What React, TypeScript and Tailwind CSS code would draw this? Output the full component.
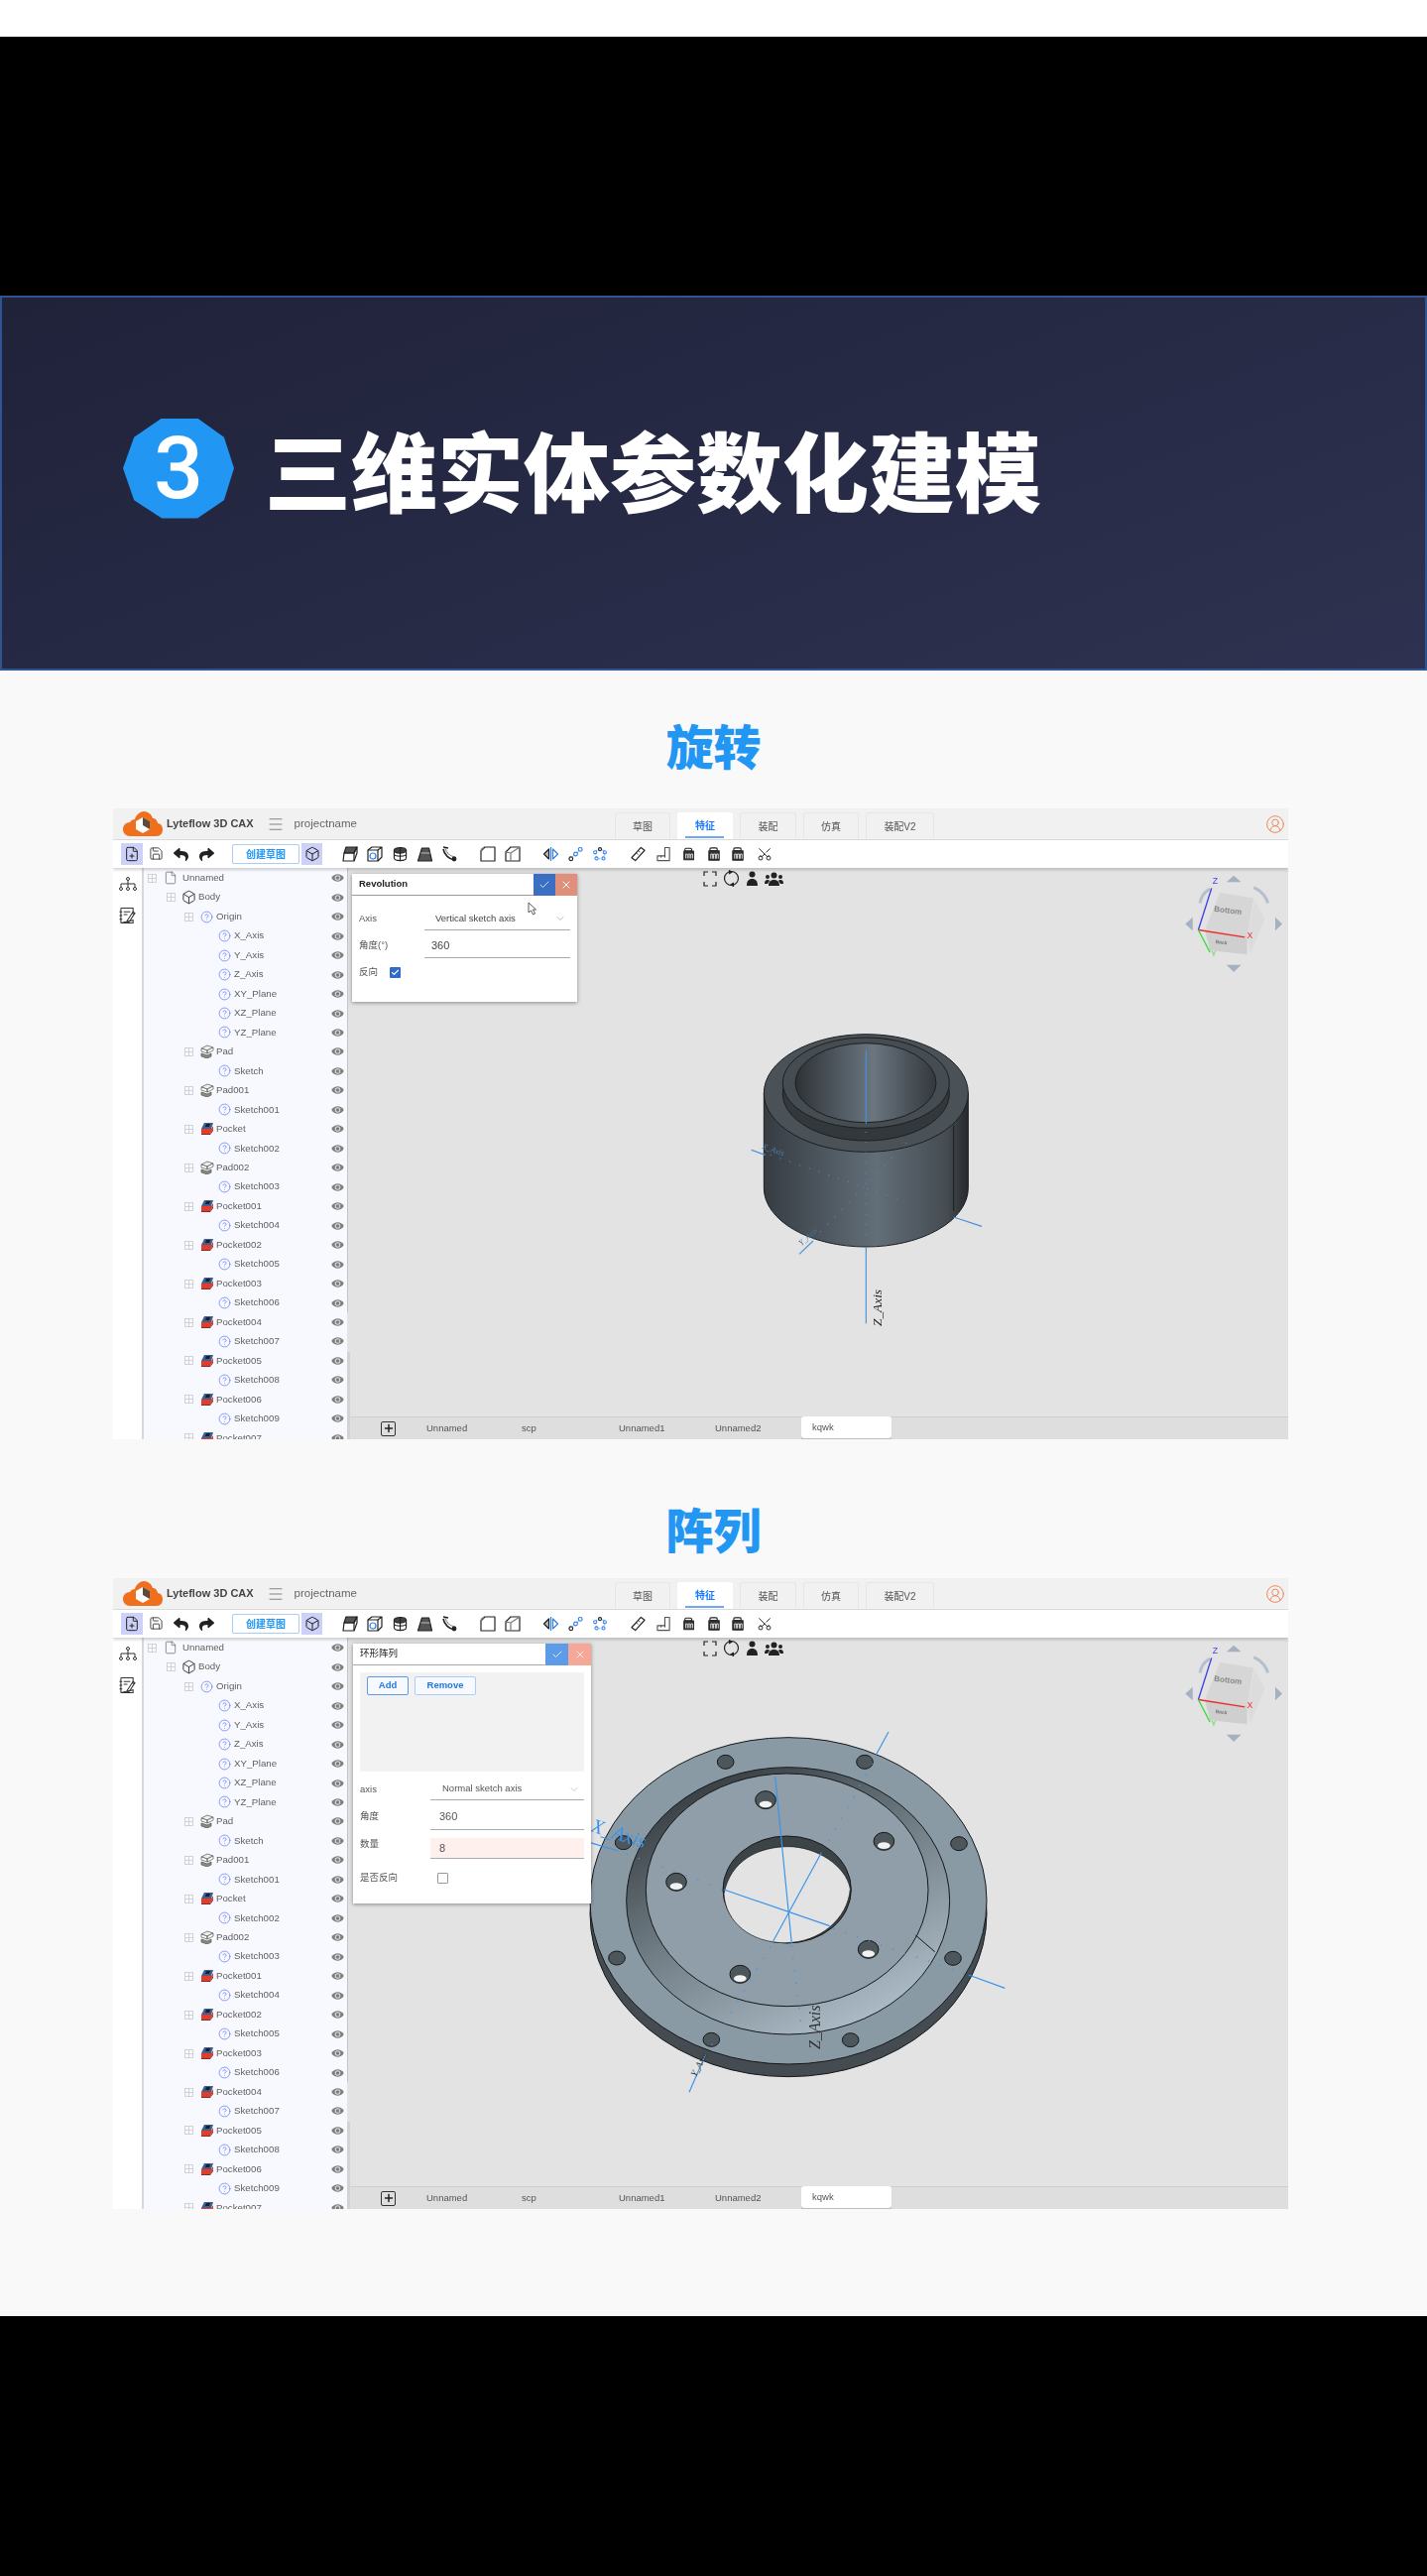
import React from "react";
import { Box, Check, ChevronDown, CircleHelp, CircleUserRound, File, FilePlus, Menu, Plus, Save, Scissors, X } from "lucide-react";
import { FaReply, FaShare } from "react-icons/fa";

const S = ({ children }: { children: React.ReactNode }) => (
  <svg viewBox="0 0 16 16" className="w-full h-full" fill="none" stroke="#222" strokeWidth="1.2" strokeLinejoin="round">
    {children}
  </svg>
);

const Can = () => (
  <S>
    <rect x="3" y="1.5" width="8" height="3" rx="1.5" />
    <path d="M2 4.5h11v10H2z" fill="#333" />
    <path d="M4 13V8h2v5M7 13V8h2v5M10 13V8h2v5" stroke="#eee" strokeWidth="0.9" />
  </S>
);

const Toolbar = () => (
  <div className="h-[28px] bg-white flex items-center relative z-10 shadow-[0_2px_3px_rgba(0,0,0,0.18)]">
    <div className="ml-[8px] w-[22px] h-[22px] bg-[#cdd0f7] flex items-center justify-center">
      <FilePlus size={16} strokeWidth={1.5} color="#222" />
    </div>
    <div className="ml-[6px] w-[15px] h-[16px]"><Save size={15} strokeWidth={1.4} color="#333" /></div>
    <div className="ml-[10px] w-[15px]"><FaReply size={15} color="#222" /></div>
    <div className="ml-[11px] w-[15px]"><FaShare size={15} color="#222" /></div>
    <div className="ml-[18px] w-[68px] h-[20px] border border-[#a9cdf5] rounded-[2px] flex items-center justify-center text-[10px] font-bold text-[#2196f3]">创建草图</div>
    <div className="ml-[2px] w-[21px] h-[22px] bg-[#cdd0f7] flex items-center justify-center">
      <Box size={16} strokeWidth={1.5} color="#222" />
    </div>
    <div className="ml-[20px] w-[16px] h-[16px]"><S><path d="M4 1h11l-3 6H2z" fill="#555" /><path d="M2 7h10v8H1z" /><path d="M12 7l3-6v6l-3 8" /></S></div>
    <div className="ml-[9px] w-[16px] h-[16px]"><S><path d="M1 4h10v11H1z" /><path d="M1 4l4-3h10v10l-4 4M11 4l4-3" /><circle cx="6" cy="10" r="3" stroke="#2f80ed" /></S></div>
    <div className="ml-[10px] w-[15px] h-[16px]"><S><ellipse cx="8" cy="4" rx="6.5" ry="3" fill="#444" /><path d="M1.500 4v8c0 4 13 4 13 0V4" /><path d="M1.500 8c0 3 13 3 13 0M8 1v14" /></S></div>
    <div className="ml-[9px] w-[17px] h-[16px]"><S><path d="M5 2h7l3 13H1z" fill="#555" /><path d="M4 7h9" stroke="#aaa" /></S></div>
    <div className="ml-[8px] w-[16px] h-[16px]"><S><path d="M2 1l5 1M2 3c1 6 6 10 11 11" strokeWidth="1.600" /><path d="M4 2c1 5 5 8 10 9" stroke="#888" /><circle cx="13" cy="13" r="1.800" fill="#222" /></S></div>
    <div className="ml-[23px] w-[16px] h-[16px]"><S><path d="M1 15V5l4-4h10v14z" /><path d="M4 1.500C2 2 1.500 3 1 5" strokeWidth="1.800" stroke="#777" /></S></div>
    <div className="ml-[9px] w-[16px] h-[16px]"><S><path d="M1 15V6l5-5h9v14z" /><path d="M1 6l5 1v8M6 7l9-6" stroke="#777" /></S></div>
    <div className="ml-[22px] w-[17px] h-[16px]"><S><path d="M6 3v10L1 8z" fill="#bbb" /><path d="M8 1v14" stroke="#2f80ed" /><path d="M10 3v10l5-5z" stroke="#2f80ed" /></S></div>
    <div className="ml-[9px] w-[15px] h-[16px]"><S><circle cx="3" cy="13" r="2" /><circle cx="8" cy="8" r="2" stroke="#2f80ed" /><circle cx="13" cy="3" r="2" stroke="#2f80ed" /><path d="M4.500 11.500l2-2M9.500 6.500l2-2" stroke="#2f80ed" strokeDasharray="1 1" /></S></div>
    <div className="ml-[10px] w-[14px] h-[16px]"><S><circle cx="8" cy="8" r="5.500" stroke="#8db8f0" strokeDasharray="2 2" /><circle cx="8" cy="2.500" r="1.800" /><circle cx="2.500" cy="6" r="1.800" stroke="#2f80ed" /><circle cx="13.500" cy="6" r="1.800" stroke="#2f80ed" /><circle cx="4" cy="13" r="1.800" stroke="#2f80ed" /><circle cx="12" cy="13" r="1.800" stroke="#2f80ed" /></S></div>
    <div className="ml-[24px] w-[15px] h-[16px]"><S><path d="M11 1l4 3-10 11-4-3z" /><path d="M8 4.500l2 1.500M6 7l2 1.500" strokeWidth="0.800" /></S></div>
    <div className="ml-[11px] w-[15px] h-[16px]"><S><path d="M9 1h5v14H1v-5h8z" stroke="#555" /><path d="M9 10v2M5 10v2" strokeWidth="0.800" /></S></div>
    <div className="ml-[11px] w-[14px] h-[16px]"><Can /></div>
    <div className="ml-[11px] w-[15px] h-[16px]"><Can /></div>
    <div className="ml-[9px] w-[15px] h-[16px]"><Can /></div>
    <div className="ml-[11px] w-[15px] h-[16px]"><Scissors size={16} strokeWidth={1.400} color="#222" className="-rotate-90" /></div>
  </div>
);

const Logo = () => (
  <svg viewBox="0 0 40 25" className="w-[40px] h-[25px] shrink-0">
    <path d="M7 25C3 25 0 22 0 18c0-4 3-7 7-7 1-2 3-3 5-3 1-4 5-8 9-8s8 3 9 7c1 0 2 0 3 1 1 1 2 3 2 4 3 0 5 3 5 6 0 4-2 7-6 7z" fill="#ef6f1d" />
    <path d="M20 6l7 4v8l-7 4-7-4v-8z" fill="#fff" />
    <path d="M20 6l7 4v8l-7-4z" fill="#5c4a3c" />
  </svg>
);

const tabBase = "h-[27px] rounded-t-[3px] border border-b-0 border-[#e6e6e6] flex items-center justify-center text-[10px] text-[#555]";

const Header = () => (
  <div className="h-[32px] bg-[#f1f1f1] border-b border-[#dcdcdc] flex">
    <div className="w-[506px] flex items-center pl-[10px]">
      <Logo />
      <span className="ml-[4px] text-[11px] font-bold text-[#444]">Lyteflow 3D CAX</span>
      <Menu size={18} strokeWidth={1.200} color="#777" className="ml-[13px]" />
      <span className="ml-[10px] text-[11.500px] text-[#666]">projectname</span>
    </div>
    <div className="flex gap-[7px] items-end">
      <div className={`${tabBase} w-[56px]`}>草图</div>
      <div className="h-[27px] w-[56px] bg-white rounded-t-[3px] relative flex items-center justify-center text-[10px] font-bold text-[#1677ff]">
        特征
        <div className="absolute bottom-[1px] left-[8px] w-[39px] h-[2px] bg-[#6ea5f7]" />
      </div>
      <div className={`${tabBase} w-[57px]`}>装配</div>
      <div className={`${tabBase} w-[56px]`}>仿真</div>
      <div className={`${tabBase} w-[69px]`}>装配V2</div>
    </div>
    <div className="ml-auto mr-[3px] self-center">
      <CircleUserRound size={20} strokeWidth={1.200} color="#ee8a5f" />
    </div>
  </div>
);

const Rail = () => (
  <div className="w-[31px] bg-white border-r-2 border-[#d8d8d8] flex flex-col items-center pt-[9px] gap-[16px] shrink-0">
    <svg viewBox="0 0 18 14" className="w-[18px] h-[14px]" fill="none" stroke="#333" strokeWidth="1">
      <circle cx="9" cy="2" r="1.500" />
      <path d="M9 3.500V10M2 10V7h14v3" />
      <circle cx="2" cy="12" r="1.500" /><circle cx="9" cy="12" r="1.500" /><circle cx="16" cy="12" r="1.500" />
    </svg>
    <svg viewBox="0 0 18 18" className="w-[17px] h-[18px]" fill="none" stroke="#333" strokeWidth="1.100">
      <path d="M2 1h13v7M15 14v3H2zM2 1v16" />
      <path d="M0.500 5h3M0.500 9h3M0.500 13h3M5 5h7M5 8h4" />
      <path d="M9 14l6-9 2 1.500-6 9-2.500 1z" />
    </svg>
  </div>
);

const Eye = () => (
  <svg viewBox="0 0 13 10" className="w-[13px] h-[10px] ml-auto mr-[3px] shrink-0">
    <path d="M0.300 5C3 0 10 0 12.700 5 10 10 3 10 0.300 5Z" fill="#7d7d7d" />
    <circle cx="6.500" cy="5" r="2.800" fill="#d8d8d8" />
    <circle cx="6.500" cy="5" r="1.700" fill="#7d7d7d" />
  </svg>
);

const Expander = ({ cls }: { cls: string }) => (
  <svg viewBox="0 0 9 9" className={`w-[9px] h-[9px] shrink-0 ${cls}`} fill="none" stroke="#c9c9c9" strokeWidth="0.800">
    <rect x="0.500" y="0.500" width="8" height="8" />
    <path d="M4.500 0.500v8M0.500 4.500h8" />
  </svg>
);

const PadIcon = () => (
  <svg viewBox="0 0 14 14" className="w-[14px] h-[14px] ml-[7px] -mr-[1px] shrink-0" stroke="#555" strokeWidth="0.700">
    <path d="M1 4l6-3 6 2-6 3z" fill="#eeeeea" />
    <path d="M1 4v3l6 2V6zM13 3v3L7 9V6z" fill="#fff" />
    <path d="M1 9l6 2 4-2v3l-4 2-6-2z" fill="#8a8a7a" />
  </svg>
);

const PocketIcon = () => (
  <svg viewBox="0 0 14 14" className="w-[14px] h-[14px] ml-[7px] -mr-[1px] shrink-0">
    <path d="M4 1h9l-2 6H1z" fill="#3f5f8f" />
    <path d="M6 2h4l-1 3H5z" fill="#16202e" />
    <path d="M1 7h10l2-3v3l-3 5H1z" fill="#e23d2c" />
    <path d="M1 12h9l3-5v2l-3 4H1z" fill="#7a3028" />
  </svg>
);

type Kind = "doc" | "body" | "q" | "pad" | "pocket";

const Row = ({ label, level, kind }: { label: string; level: number; kind: Kind }) => {
  const exp = ["ml-[4px]", "ml-[23px]", "ml-[41px]"][level];
  return (
    <div className="h-[19.470px] flex items-center shrink-0 text-[9.700px] text-[#5f5f5f] whitespace-nowrap">
      {level < 3 && <Expander cls={exp} />}
      {kind === "doc" && <File size={14} strokeWidth={1} color="#444" className="ml-[7px] shrink-0" />}
      {kind === "body" && <Box size={15} strokeWidth={1.500} color="#333" className="ml-[6px] shrink-0" />}
      {kind === "q" && level === 2 && <CircleHelp size={13} strokeWidth={1.500} color="#6f82f7" className="ml-[7px] shrink-0" />}
      {kind === "q" && level === 3 && <CircleHelp size={13} strokeWidth={1.500} color="#6f82f7" className="ml-[75px] shrink-0" />}
      {kind === "pad" && <PadIcon />}
      {kind === "pocket" && <PocketIcon />}
      <span className={kind === "doc" ? "ml-[5px]" : kind === "body" ? "ml-[2px]" : "ml-[3px]"}>{label}</span>
      <Eye />
    </div>
  );
};

const rows: [string, number, Kind][] = [
  ["Unnamed", 0, "doc"], ["Body", 1, "body"], ["Origin", 2, "q"],
  ["X_Axis", 3, "q"], ["Y_Axis", 3, "q"], ["Z_Axis", 3, "q"], ["XY_Plane", 3, "q"], ["XZ_Plane", 3, "q"], ["YZ_Plane", 3, "q"],
  ["Pad", 2, "pad"], ["Sketch", 3, "q"], ["Pad001", 2, "pad"], ["Sketch001", 3, "q"],
  ["Pocket", 2, "pocket"], ["Sketch002", 3, "q"], ["Pad002", 2, "pad"], ["Sketch003", 3, "q"],
  ["Pocket001", 2, "pocket"], ["Sketch004", 3, "q"], ["Pocket002", 2, "pocket"], ["Sketch005", 3, "q"],
  ["Pocket003", 2, "pocket"], ["Sketch006", 3, "q"], ["Pocket004", 2, "pocket"], ["Sketch007", 3, "q"],
  ["Pocket005", 2, "pocket"], ["Sketch008", 3, "q"], ["Pocket006", 2, "pocket"], ["Sketch009", 3, "q"], ["Pocket007", 2, "pocket"],
];

const Tree = () => (
  <div className="w-[205px] bg-[#f7f9ff] flex flex-col overflow-hidden shrink-0 pt-[0.500px]">
    {rows.map(([l, lv, k]) => <Row key={l} label={l} level={lv} kind={k} />)}
  </div>
);

const NavCube = () => (
  <svg viewBox="60 230 320 320" className="absolute left-[840px] top-[3px] w-[107px] h-[107px]">
    <g fill="#a5b0c0">
      <path d="M200 264h44l-22-20zM200 513h44l-22 22zM98 370v40l-22-20zM347 370v40l21-20z" />
    </g>
    <path d="M120 327Q125 297 150 284M282 280Q315 295 325 327" fill="none" stroke="#b6c0cd" strokeWidth="9" />
    <path d="M180 295L282 312 262 425 135 408z" fill="#d6d6d6" />
    <path d="M135 408L262 425 262 482 150 470z" fill="#cfcfcf" />
    <path d="M285 318L316 375 272 480 262 425z" fill="#dcdcdc" />
    <text x="162" y="352" fontSize="24" fontWeight="bold" fill="#888" fontFamily="'Liberation Sans',sans-serif" transform="rotate(7 162 352)">Bottom</text>
    <text x="166" y="448" fontSize="15" fontWeight="bold" fill="#777" fontFamily="'Liberation Sans',sans-serif" transform="rotate(7 166 448)">Back</text>
    <path d="M115 408L155 282" stroke="#3f3fe8" strokeWidth="4" />
    <path d="M115 408L255 430" stroke="#ef2b2b" strokeWidth="4" />
    <path d="M115 408L150 475" stroke="#37e037" strokeWidth="4" />
    <text x="158" y="270" fontSize="26" fill="#3f3fe8" fontFamily="'Liberation Sans',sans-serif">Z</text>
    <text x="262" y="433" fontSize="26" fill="#ef2b2b" fontFamily="'Liberation Sans',sans-serif">X</text>
    <text x="154" y="486" fontSize="22" fill="#37e037" fontFamily="'Liberation Sans',sans-serif">Y</text>
  </svg>
);

const ViewTools = () => (
  <div className="absolute left-[359px] top-[2px] flex items-center gap-[6px]">
    <svg viewBox="0 0 14 16" className="w-[14px] h-[16px]" fill="none" stroke="#222" strokeWidth="1.200"><path d="M1 5V1h4M9 1h4v4M13 11v4H9M5 15H1v-4" /></svg>
    <svg viewBox="0 0 17 17" className="w-[17px] h-[17px]" fill="none" stroke="#222" strokeWidth="1.200"><circle cx="8.500" cy="8.500" r="7" /><path d="M6 0.500l3 1.500-3 2M11 16.500l-3-1.500 3-2" fill="#222" /></svg>
    <svg viewBox="0 0 13 16" className="w-[13px] h-[16px]" fill="#222"><circle cx="6.500" cy="3.500" r="3" /><path d="M1 15c0-5 2-7 5.500-7S12 10 12 15z" /></svg>
    <svg viewBox="0 0 19 14" className="w-[19px] h-[14px]" fill="#222"><circle cx="9.500" cy="3.500" r="3" /><circle cx="3" cy="5" r="2" /><circle cx="16" cy="5" r="2" /><path d="M4 14c0-4 2-6 5.500-6S15 10 15 14zM0 12c0-3 1-4 3-4s2 1 2 1l-2 3zM19 12c0-3-1-4-3-4s-2 1-2 1l2 3z" /></svg>
  </div>
);

const Cylinder = () => (
  <svg viewBox="0 0 1080 1080" className="absolute left-[350px] top-[126px] w-[360px] h-[360px]">
    <defs>
      <linearGradient id="cylBody" x1="0" x2="1" y1="0" y2="0">
        <stop offset="0" stopColor="#363c42" /><stop offset="0.55" stopColor="#626e78" /><stop offset="0.9" stopColor="#454b51" /><stop offset="1" stopColor="#25282c" />
      </linearGradient>
      <linearGradient id="cylHole" x1="0" x2="1" y1="0" y2="0">
        <stop offset="0" stopColor="#2e3236" /><stop offset="0.55" stopColor="#6a7680" /><stop offset="1" stopColor="#33383c" />
      </linearGradient>
    </defs>
    <path d="M211 303V590A309 178 0 0 0 829 590V303z" fill="url(#cylBody)" stroke="#1c1f22" strokeWidth="3" />
    <path d="M785 400V660" stroke="#1c1f22" strokeWidth="3" />
    <ellipse cx="520" cy="303" rx="309" ry="178" fill="#4a5157" stroke="#1c1f22" strokeWidth="3" />
    <ellipse cx="520" cy="305" rx="252" ry="142" fill="#33383c" stroke="#1c1f22" strokeWidth="3" />
    <ellipse cx="520" cy="272" rx="252" ry="137" fill="#454c52" stroke="#1c1f22" strokeWidth="3" />
    <ellipse cx="519" cy="272" rx="213" ry="120" fill="url(#cylHole)" stroke="#1c1f22" strokeWidth="3" />
    <g stroke="#4a90d9" strokeWidth="3.500" fill="none">
      <path d="M520 175V395M520 768V1000M173 475L215 490M785 678L870 706M318 790L360 750" />
      <path d="M520 420V750M230 490L620 625M360 745L660 435" strokeDasharray="3 28" strokeWidth="5" opacity="0.7" />
    </g>
    <text x="0" y="0" fontSize="40" fontStyle="italic" fill="#222" fontFamily="'Liberation Serif',serif" transform="translate(566 1008) rotate(-90)">Z_Axis</text>
    <text x="0" y="0" fontSize="24" fontStyle="italic" fill="#4a7fb5" fontFamily="'Liberation Serif',serif" transform="translate(205 470) rotate(20)">X_Axis</text>
    <text x="0" y="0" fontSize="24" fontStyle="italic" fill="#4a6f95" fontFamily="'Liberation Serif',serif" transform="translate(325 765) rotate(-42)">Y_Axis</text>
  </svg>
);

const holesOuter = [[455, 226], [876, 226], [1161, 473], [1143, 820], [833, 1067], [412, 1066], [126, 819], [146, 470]];
const holesInner = [[576, 341], [934, 466], [887, 793], [499, 868], [306, 589]];

const Disc = () => (
  <svg viewBox="0 0 1380 1260" className="absolute left-[230px] top-[50px] w-[460px] h-[420px]">
    <defs>
      <linearGradient id="ring" x1="0.100" x2="0.700" y1="0" y2="1">
        <stop offset="0" stopColor="#2c3134" /><stop offset="0.500" stopColor="#6f7c84" /><stop offset="1" stopColor="#aebdc8" />
      </linearGradient>
    </defs>
    <ellipse cx="645" cy="684" rx="600" ry="494" fill="#454c51" stroke="#15181a" strokeWidth="3" />
    <ellipse cx="645" cy="646" rx="600" ry="494" fill="#8a9aa4" stroke="#15181a" strokeWidth="3" />
    <ellipse cx="644" cy="646" rx="489" ry="404" fill="url(#ring)" stroke="#15181a" strokeWidth="3" />
    <ellipse cx="641" cy="613" rx="427" ry="352" fill="#8f9ea8" stroke="#15181a" strokeWidth="3" />
    <path d="M1030 750L1088 800" stroke="#15181a" strokeWidth="3" />
    <ellipse cx="641" cy="612" rx="194" ry="162" fill="#3d4448" stroke="#15181a" strokeWidth="3" />
    <path d="M450 625C470 520 560 482 645 482 730 482 820 540 832 610 825 700 740 773 635 773 530 773 455 710 450 625Z" fill="#e3e3e3" stroke="#15181a" strokeWidth="2" />
    {holesOuter.map(([x, y]) => (
      <ellipse key={`${x}-${y}`} cx={x} cy={y} rx="25" ry="21" fill="#4d565b" stroke="#15181a" strokeWidth="3" />
    ))}
    {holesInner.map(([x, y]) => (
      <g key={`${x}-${y}`}>
        <ellipse cx={x} cy={y} rx="31" ry="27" fill="#4d565b" stroke="#15181a" strokeWidth="3" />
        <ellipse cx={x} cy={y + 13} rx="19" ry="10" fill="#f2f2f2" />
      </g>
    ))}
    <g stroke="#3a93ea" strokeWidth="3.500" fill="none">
      <path d="M948 135L910 205M745 500L597 772M395 1110L345 1225M605 270L655 775M450 612L770 722M1190 870L1300 910M130 495L45 470" />
      <path d="M900 230L750 495M590 785L400 1105M655 780L690 1080M780 730L1185 868M445 610L135 497" strokeDasharray="4 34" strokeWidth="4.500" opacity="0.8" />
    </g>
    <text x="0" y="0" fontSize="60" fontStyle="italic" fill="#3a93ea" fontFamily="'Liberation Serif',serif" transform="translate(45 435) rotate(18)">X_Axis</text>
    <text x="0" y="0" fontSize="48" fontStyle="italic" fill="#333" fontFamily="'Liberation Serif',serif" transform="translate(740 1095) rotate(-90)">Z_Axis</text>
    <text x="0" y="0" fontSize="28" fontStyle="italic" fill="#333" fontFamily="'Liberation Serif',serif" transform="translate(365 1180) rotate(-62)">Y_Axis</text>
  </svg>
);

const BottomBar = () => (
  <div className="h-[23px] bg-[#dedede] border-t border-[#cfcfcf] flex items-center text-[9.500px] text-[#555] shrink-0">
    <div className="ml-[34px] w-[15px] h-[15px] border border-[#333] rounded-[2px] flex items-center justify-center shrink-0">
      <Plus size={12} strokeWidth={3} color="#222" />
    </div>
    <span className="ml-[31px] w-[96px]">Unnamed</span>
    <span className="w-[98px]">scp</span>
    <span className="w-[97px]">Unnamed1</span>
    <span className="w-[87px]">Unnamed2</span>
    <div className="w-[91px] h-[22px] -mt-[2px] bg-white rounded-[3px] pl-[11px] flex items-center shadow-[0_2px_0_#bdbdbd]">kqwk</div>
  </div>
);

const Field = ({ label, children, cls }: { label: string; children: React.ReactNode; cls: string }) => (
  <div className={`flex items-center text-[9.500px] text-[#555] ${cls}`}>
    {label}
    {children}
  </div>
);

const RevolutionDialog = () => (
  <div className="absolute left-[5px] top-[6px] w-[227px] h-[129px] bg-white shadow-[0_1px_4px_rgba(0,0,0,0.4)] z-10">
    <div className="h-[22px] border-b border-[#999] flex items-center pl-[7px] text-[9.500px] font-bold text-[#222]">
      Revolution
      <div className="ml-auto w-[22px] h-[22px] bg-[#3b6fc4] flex items-center justify-center"><Check size={12} color="#cfe0ff" /></div>
      <div className="w-[22px] h-[22px] bg-[#e0907a] flex items-center justify-center"><X size={12} color="#fff" /></div>
    </div>
    <div className="pl-[7px] pr-[7px] pt-[12px]">
      <Field label="Axis" cls="h-[23px]">
        <div className="ml-auto w-[147px] h-full border-b border-[#aaa] flex items-center pl-[11px] pr-[4px] text-[#444]">
          Vertical sketch axis
          <ChevronDown size={12} strokeWidth={1} className="ml-auto" color="#777" />
        </div>
      </Field>
      <Field label="角度(°)" cls="h-[28px] pt-[3px]">
        <div className="ml-auto w-[147px] h-full border-b border-[#aaa] flex items-center pl-[7px] text-[#444] text-[11px]">360</div>
      </Field>
      <Field label="反向" cls="h-[26px] pt-[2px]">
        <div className="ml-[12px] w-[11px] h-[11px] bg-[#2f6bc9] rounded-[1px] flex items-center justify-center">
          <Check size={9} strokeWidth={3} color="#fff" />
        </div>
      </Field>
    </div>
  </div>
);

const PatternDialog = () => (
  <div className="absolute left-[6px] top-[6px] w-[240px] h-[262px] bg-white shadow-[0_1px_4px_rgba(0,0,0,0.4)] z-10">
    <div className="h-[22px] border-b border-[#aaa] flex items-center pl-[7px] text-[9.500px] text-[#222]">
      环形阵列
      <div className="ml-auto w-[23px] h-[22px] bg-[#5b9be8] flex items-center justify-center"><Check size={12} color="#e6f0ff" /></div>
      <div className="w-[23px] h-[22px] bg-[#f5a898] flex items-center justify-center"><X size={12} color="#ffe9e4" /></div>
    </div>
    <div className="mx-[7px] mt-[7px] h-[100px] bg-[#f2f2f2] pt-[4px] pl-[7px] flex gap-[6px] items-start">
      <div className="w-[42px] h-[19px] border border-[#5b9be8] rounded-[2px] bg-[#f7f9ff] flex items-center justify-center text-[9.500px] font-bold text-[#1f7ae0]">Add</div>
      <div className="w-[62px] h-[19px] border border-[#a9cdf5] rounded-[2px] bg-[#f7f9ff] flex items-center justify-center text-[9.500px] font-bold text-[#1f7ae0]">Remove</div>
    </div>
    <div className="px-[7px] pt-[7px]">
      <Field label="axis" cls="h-[22px]">
        <div className="ml-auto w-[155px] h-full border-b border-[#aaa] flex items-center pl-[12px] pr-[4px] text-[#555]">
          Normal sketch axis
          <ChevronDown size={12} strokeWidth={1} className="ml-auto" color="#999" />
        </div>
      </Field>
      <Field label="角度" cls="h-[30px] pt-[3px]">
        <div className="ml-auto w-[155px] h-full border-b border-[#aaa] flex items-center pl-[9px] text-[11px]">360</div>
      </Field>
      <Field label="数量" cls="h-[29px]">
        <div className="ml-auto w-[155px] h-[21px] self-end bg-[#fdf0ed] border-b border-[#aaa] flex items-center pl-[9px] text-[11px]">8</div>
      </Field>
      <Field label="是否反向" cls="h-[38px]">
        <div className="ml-[40px] mr-auto w-[11px] h-[11px] bg-white border border-[#999] rounded-[1px]" />
      </Field>
    </div>
  </div>
);

const Cursor = () => (
  <svg viewBox="0 0 10 14" className="absolute left-[182px] top-[34px] w-[10px] h-[14px] z-20">
    <path d="M1 1v10l2.500-2 2 4 2-1-2-4h3z" fill="#fff" stroke="#333" strokeWidth="0.800" />
  </svg>
);

const CadPanel = ({ second }: { second?: boolean }) => (
  <div className="ml-[114px] w-[1185px] h-[636px] flex flex-col overflow-hidden bg-white blur-[0.3px] font-['Liberation_Sans','Noto_Sans_CJK_SC',sans-serif]">
    <Header />
    <Toolbar />
    <div className="flex-1 flex min-h-0">
      <Rail />
      <Tree />
      <div className="flex-1 flex flex-col bg-[#e3e3e3] relative">
        <div className="flex-1 relative overflow-hidden">
          <div className="absolute left-0 top-0 w-px h-[448px] bg-[#c4c4c4]" />
          <ViewTools />
          <NavCube />
          {second ? <Disc /> : <Cylinder />}
          {second ? <PatternDialog /> : <RevolutionDialog />}
          {second ? null : <Cursor />}
        </div>
        <BottomBar />
        <div className="absolute left-0 bottom-0 w-[3px] h-[88px] bg-[#d2d2d2]" />
      </div>
    </div>
  </div>
);

const Heading = ({ text, cls }: { text: string; cls: string }) => (
  <h2 className={`h-[54px] flex items-center justify-center text-[48px] leading-none font-black text-[#2196f3] ${cls}`}>{text}</h2>
);

export default function App() {
  return (
    <div className="w-[1439px] font-['Noto_Sans_CJK_SC','Noto_Sans',sans-serif]">
      <div className="h-[37px] bg-white" />
      <div className="h-[261px] bg-black" />
      <div className="h-[378px] border-2 border-[#2f5490] bg-linear-[160deg] from-[#20223a] to-[#2e3250] flex items-center pl-[122px] pb-[30px]">
        <div className="w-[112px] h-[101px] bg-[#2196f3] flex items-center justify-center text-white text-[88px] font-['Roboto',sans-serif] font-medium leading-none shrink-0 [clip-path:polygon(35%_0,67%_0,91%_19%,100%_50%,91%_82%,67%_100%,35%_100%,10%_82%,0_50%,10%_19%)]">
          3
        </div>
        <h1 className="ml-[31px] text-[87px] leading-none font-black text-white whitespace-nowrap">三维实体参数化建模</h1>
      </div>
      <main className="bg-[#f9f9f9] h-[1659px] pt-[47px]">
        <Heading text="旋转" cls="mb-[38px]" />
        <CadPanel />
        <Heading text="阵列" cls="mt-[62px] mb-[24px]" />
        <CadPanel second />
      </main>
      <div className="h-[262px] bg-black" />
    </div>
  );
}
